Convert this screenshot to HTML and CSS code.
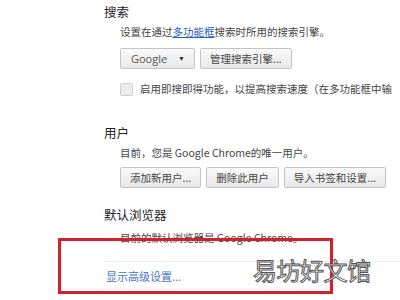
FILE: index.html
```html
<!DOCTYPE html>
<html lang="zh-CN">
<head>
    <meta charset="UTF-8">
    <title>设置</title>
    <link rel="stylesheet" href="styles.css">
</head>
<body>

<div class="settings">
    <section class="group">
        <h3>搜索</h3>
        <div class="group-body">
            <p class="desc">设置在通过<a href="#">多功能框</a>搜索时所用的搜索引擎。</p>
            <div class="row">
                <button class="btn select">Google <span class="caret">▼</span></button>
                <button class="btn">管理搜索引擎...</button>
            </div>
            <label class="check">
                <span class="box"></span>
                启用即搜即得功能，以提高搜索速度（在多功能框中输
            </label>
        </div>
    </section>

    <section class="group users">
        <h3>用户</h3>
        <div class="group-body">
            <p class="desc">目前，您是 Google Chrome的唯一用户。</p>
            <div class="row">
                <button class="btn">添加新用户...</button>
                <button class="btn">删除此用户</button>
                <button class="btn">导入书签和设置...</button>
            </div>
        </div>
    </section>

    <section class="group browser">
        <h3>默认浏览器</h3>
        <div class="group-body">
            <p class="desc">目前的默认浏览器是 Google Chrome。</p>
        </div>
    </section>

    <div class="advanced">
        <a href="#">显示高级设置...</a>
    </div>
</div>

<div class="highlight"></div>
<div class="watermark">易坊好文馆</div>

</body>
</html>
```

FILE: styles.css
```css
body {
    margin: 0;
    background: #fff;
    font-family: "Noto Sans CJK SC", "Liberation Sans", sans-serif;
    color: #444;
    overflow: hidden;
}

.settings {
    padding: 4px 0 0 104px;
}

.group h3 {
    margin: 0;
    font-size: 12.5px;
    line-height: 16px;
    font-weight: normal;
    color: #222;
}

.group-body {
    padding-left: 16px;
}

.desc {
    margin: 5px 0 0;
    font-size: 10.5px;
    line-height: 14px;
    white-space: nowrap;
}

.desc a {
    color: #2a5bc8;
}

.row {
    display: flex;
    gap: 5px;
    margin-top: 9px;
}

.btn {
    height: 21px;
    padding: 0 9px;
    border: 1px solid #c4c4c4;
    border-radius: 2px;
    background: linear-gradient(#fafafa, #e8e8e8);
    font-family: inherit;
    font-size: 10.5px;
    color: #444;
    white-space: nowrap;
}

.select {
    width: 75px;
    text-align: left;
    padding-left: 10px;
    font-family: "Open Sans", "Liberation Sans", sans-serif;
    font-size: 11px;
    color: #555;
    display: flex;
    align-items: center;
    justify-content: space-between;
}

.caret {
    font-size: 7px;
    color: #333;
}

.check {
    display: flex;
    align-items: center;
    gap: 7px;
    margin-top: 13px;
    font-size: 10.5px;
    line-height: 14px;
    white-space: nowrap;
}

.box {
    width: 11px;
    height: 11px;
    border: 1px solid #cfcfcf;
    border-radius: 2px;
    background: #ececec;
    flex: none;
}

.users {
    margin-top: 29px;
}

.users .row {
    margin-top: 7px;
}

.browser {
    margin-top: 19px;
}

.browser .desc {
    margin-top: 8px;
}

.advanced {
    margin-top: 16px;
    border-top: 1px solid #ececec;
    padding: 7px 0 0 2px;
    font-size: 11px;
    line-height: 14px;
}

.advanced a {
    color: #4a74c9;
    text-decoration: none;
}

.highlight {
    position: absolute;
    left: 58px;
    top: 238px;
    width: 269px;
    height: 50px;
    border: 3px solid #d3212b;
}

.watermark {
    position: absolute;
    left: 253px;
    top: 255px;
    font-size: 24px;
    line-height: 30px;
    color: #fff;
    -webkit-text-stroke: 1px #555;
    letter-spacing: -0.5px;
}
```
